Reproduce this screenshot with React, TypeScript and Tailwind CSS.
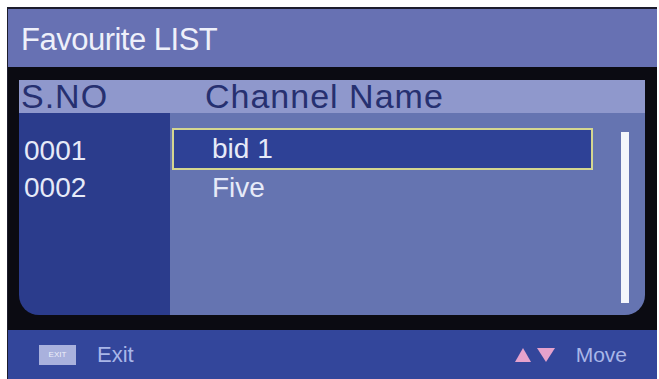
import React from "react";

export default function App() {
  const font = { fontFamily: '"Liberation Sans", Arial, sans-serif' };
  return (
    <div className="w-[659px] h-[379px] bg-white overflow-hidden" style={font}>
      <div className="ml-[7px] mt-[7px] w-[650px] h-[372px] flex flex-col border-t-2 border-l border-[#1c1c2c] bg-[#0b0b12]">
        {/* Title bar */}
        <div className="h-[58px] bg-[#6771b3] flex items-center pl-[13px]">
          <span className="text-[31px] tracking-[-0.5px] text-[#eef0fa] leading-none mt-[3px]">Favourite LIST</span>
        </div>
        {/* Black band with panel */}
        <div className="h-[263px] pt-[13px] pl-[11px] pr-[12px] pb-[15px]">
          <div className="h-[235px] flex flex-col">
            <div className="h-[33px] bg-[#8f98cc] flex items-center text-[34px] tracking-[1px] text-[#263070] leading-[33px]">
              <span className="pl-[2px] w-[186px]">S.NO</span>
              <span>Channel Name</span>
            </div>
            <div className="flex-1 flex">
              <div className="w-[151px] bg-[#2b3c8c] rounded-bl-[20px] pt-[19px] pl-[5px] text-[28px] text-[#e6eaf8]">
                <div className="h-[37px] leading-[37px]">0001</div>
                <div className="h-[37px] leading-[37px]">0002</div>
              </div>
              <div className="flex-1 bg-[#6574b1] rounded-br-[20px] flex pl-[2px] pt-[15px]">
                <div className="w-[421px] flex flex-col text-[28px] text-[#e6eaf8]">
                  <div className="h-[42px] border-2 border-[#d4d690] bg-[#2e4196] flex items-center pl-[38px] leading-[32px]">
                    bid 1
                  </div>
                  <div className="h-[36px] flex items-center pl-[40px] leading-[32px]">Five</div>
                </div>
                <div className="ml-[28px] mt-[4px] w-[8px] h-[171px] bg-[#f4f6fc]" />
              </div>
            </div>
          </div>
        </div>
        {/* Footer */}
        <div className="flex-1 bg-[#33469b] flex items-center">
          <div className="ml-[31px] w-[37px] h-[20px] bg-[#a9b1dd] flex items-center justify-center text-[8px] text-[#eef0fa] leading-none">
            EXIT
          </div>
          <span className="ml-[21px] text-[22px] text-[#a9b6e8] leading-[24px]">Exit</span>
          <div className="flex-1" />
          <svg width="40" height="14" viewBox="0 0 40 14" className="mr-[21px]">
            <polygon points="0,14 8,0 16,14" fill="#e6a2cc" />
            <polygon points="22,0 40,0 31,14" fill="#e6a2cc" />
          </svg>
          <span className="mr-[30px] text-[21px] text-[#a9b6e8] leading-[24px]">Move</span>
        </div>
      </div>
    </div>
  );
}
